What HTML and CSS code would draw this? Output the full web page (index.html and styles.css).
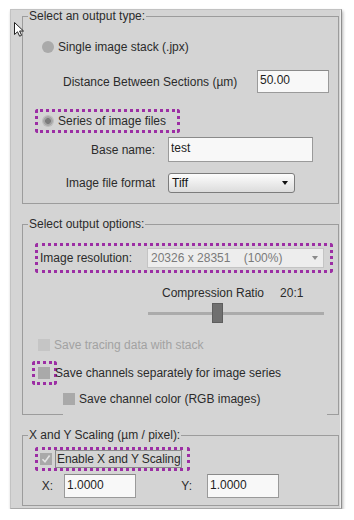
FILE: index.html
```html
<!DOCTYPE html>
<html lang="en">
<head>
    <meta charset="UTF-8">
    <title>Output Settings</title>
    <link rel="stylesheet" href="styles.css">
</head>
<body>
    <div class="panel">
        <!-- mouse pointer over the left edge -->
        <svg class="cursor" width="12" height="16" viewBox="0 0 12 16">
            <path d="M0.5 0.5 L0.5 12.5 L3.5 9.8 L5.6 14.2 L7.6 13.3 L5.6 9 L9.5 9 Z" fill="#fff" stroke="#222" stroke-width="1" stroke-linejoin="round"/>
        </svg>

        <fieldset class="group group-type">
            <legend>Select an output type:</legend>
            <div class="row row-stack">
                <span class="radio"></span>
                <span>Single image stack (.jpx)</span>
            </div>
            <div class="row row-distance">
                <span>Distance Between Sections (µm)</span>
                <input class="field field-short" type="text" value="50.00">
            </div>
            <div class="row row-series">
                <span class="mark mark-series">
                    <span class="radio radio-on"></span>
                    <span>Series of image files</span>
                </span>
            </div>
            <div class="row row-name">
                <span class="label">Base name:</span>
                <input class="field field-name" type="text" value="test">
            </div>
            <div class="row row-format">
                <span class="label">Image file format</span>
                <span class="select select-format">Tiff<span class="arrow"></span></span>
            </div>
        </fieldset>

        <fieldset class="group group-options">
            <legend>Select output options:</legend>
            <div class="row row-res">
                <span class="mark mark-res">
                    <span>Image resolution:</span>
                    <span class="select select-res">20326 x 28351    (100%)<span class="arrow arrow-light"></span></span>
                </span>
            </div>
            <div class="row row-ratio">
                <span>Compression Ratio</span>
                <span>20:1</span>
            </div>
            <div class="slider">
                <span class="thumb"></span>
            </div>
            <div class="row row-check row-tracing">
                <span class="box box-disabled"></span>
                <span class="muted">Save tracing data with stack</span>
            </div>
            <div class="row row-channels">
                <span class="mark mark-check"><span class="box"></span></span>
                <span class="channels-text">Save channels separately for image series</span>
            </div>
            <div class="row row-check row-color">
                <span class="box"></span>
                <span>Save channel color (RGB images)</span>
            </div>
        </fieldset>

        <fieldset class="group group-scale">
            <legend>X and Y Scaling (µm / pixel):</legend>
            <div class="row row-enable">
                <span class="mark mark-enable">
                    <span class="box box-checked">
                        <svg width="12" height="12" viewBox="0 0 12 12">
                            <path d="M2.5 6.2 L5 8.8 L9.6 2.6" fill="none" stroke="#e4e4e4" stroke-width="1.6"/>
                        </svg>
                    </span>
                    <span class="focus-text">Enable X and Y Scaling</span>
                </span>
            </div>
            <div class="row row-xy">
                <span class="xy-label xy-label-x">X:</span>
                <input class="field field-xy" type="text" value="1.0000">
                <span class="xy-label xy-label-y">Y:</span>
                <input class="field field-xy field-y" type="text" value="1.0000">
            </div>
        </fieldset>
    </div>
</body>
</html>
```

FILE: styles.css
```css
body {
    margin: 0;
    background-color: #ffffff;
    font-family: "Liberation Sans", Arial, sans-serif;
    font-size: 12px;
    color: #2b2b2b;
}
.panel {
    position: relative;
    box-sizing: border-box;
    width: 332px;
    height: 500px;
    margin: 9px 0 0 10px;
    padding: 0 2px 0 11px;
    background-color: #d4d4d4;
    border: 1px solid #c2c2c2;
    border-right-color: #8e8e8e;
    border-bottom-color: #a8a8a8;
    box-shadow: 1px 2px 3px rgba(0, 0, 0, 0.3), inset -1px 0 #ececec;
}
.cursor {
    position: absolute;
    left: 3px;
    top: 12px;
}
.group {
    margin: 0;
    padding: 0 0 10px;
    min-width: 0;
    border: 1px solid #9c9c9c;
}
.group legend {
    margin-left: 5px;
    padding: 0 1px;
    line-height: 13px;
}
.group-options,
.group-scale {
    margin-top: 14px;
    padding-bottom: 7px;
}
.group-options {
    border-bottom: none;
    padding-bottom: 8px;
    background: linear-gradient(#9c9c9c, #9c9c9c) left bottom / 41px 1px no-repeat,
                linear-gradient(#9c9c9c, #9c9c9c) right bottom / 12px 1px no-repeat;
    background-origin: border-box;
}
.row {
    display: flex;
    align-items: center;
    white-space: nowrap;
}
.mark {
    box-sizing: border-box;
    display: flex;
    align-items: center;
    border: 3px dotted #9c2ea4;
    border-radius: 3px;
}

/* output type */
.row-stack {
    margin-top: 12px;
    height: 24px;
    padding-left: 19px;
    gap: 4px;
}
.row-distance {
    margin-top: 11px;
    height: 23px;
    padding: 0 9px 0 40px;
}
.row-series {
    margin-top: 16px;
    height: 24px;
    padding-left: 12px;
}
.mark-series {
    width: 145px;
    height: 24px;
    padding-left: 4px;
    gap: 4px;
}
.row-name {
    margin-top: 4px;
    height: 25px;
    gap: 13px;
}
.row-format {
    margin-top: 10px;
    height: 21px;
    gap: 13px;
}
.label {
    width: 132px;
    text-align: right;
}
.radio {
    width: 12px;
    height: 12px;
    border-radius: 50%;
    background-color: #aaaaaa;
    flex-shrink: 0;
}
.radio-on {
    background: radial-gradient(circle, #7c7c7c 0 2.6px, #a6a6a6 3.2px 4.4px, #bdbdbd 5px);
}
.field {
    box-sizing: border-box;
    margin: 0;
    padding: 0 2px 3px;
    border: 1px solid #9a9a9a;
    border-top-color: #8a8a8a;
    background-color: #f8f8f8;
    font-family: "Liberation Sans", Arial, sans-serif;
    font-size: 12px;
    color: #1e1e1e;
    outline: none;
}
.field-short {
    margin-left: auto;
    width: 72px;
    height: 23px;
}
.field-name {
    width: 145px;
    height: 25px;
}
.select {
    box-sizing: border-box;
    display: flex;
    align-items: center;
    padding-left: 3px;
    white-space: pre;
}
.select-format {
    width: 127px;
    height: 20px;
    border: 1px solid #7c7c7c;
    border-radius: 3px;
    background: linear-gradient(#fdfdfd, #dcdcdc);
    color: #111;
}
.arrow {
    margin-left: auto;
    margin-right: 6px;
    border-left: 3.5px solid transparent;
    border-right: 3.5px solid transparent;
    border-top: 4px solid #111;
}
.arrow-light {
    margin-right: 5px;
    border-top-color: #8a8a8a;
}

/* output options */
.row-res {
    margin-top: 12px;
    height: 30px;
    padding-left: 12px;
}
.mark-res {
    width: 298px;
    height: 30px;
    padding: 0 6px 0 2px;
}
.select-res {
    margin-left: auto;
    width: 177px;
    height: 20px;
    border: 1px solid #c4c4c4;
    background-color: #ededed;
    color: #7a7a7a;
}
.row-ratio {
    margin-top: 12px;
    height: 16px;
    padding-left: 139px;
    gap: 16px;
}
.slider {
    display: flex;
    margin: 2px 0 0 125px;
    width: 176px;
    height: 20px;
    background: linear-gradient(#ababab, #ababab) center / 100% 3px no-repeat;
}
.thumb {
    box-sizing: border-box;
    margin-left: 64px;
    width: 11px;
    height: 20px;
    background-color: #707070;
    border: 1px solid #5e5e5e;
}
.row-check {
    height: 16px;
    gap: 4px;
    padding-left: 15px;
}
.row-tracing {
    margin-top: 14px;
}
.muted {
    color: #a2a2a2;
}
.box {
    display: block;
    width: 12px;
    height: 12px;
    background-color: #a9a9a9;
    flex-shrink: 0;
}
.box-disabled {
    background-color: #c5c5c5;
}
.row-channels {
    margin-top: 8px;
    height: 24px;
    padding-left: 9px;
}
.mark-check {
    width: 25px;
    height: 24px;
    padding-left: 3px;
}
.channels-text {
    margin-left: -2px;
}
.row-color {
    margin-top: 6px;
    padding-left: 40px;
}

/* scaling */
.row-enable {
    margin-top: 5px;
    height: 24px;
    padding-left: 12px;
}
.mark-enable {
    height: 24px;
    padding: 0 5px 0 2px;
    gap: 3px;
}
.box-checked svg {
    display: block;
}
.focus-text {
    box-sizing: border-box;
    height: 18px;
    padding: 1px 1px;
    border: 1px solid #8a8a8a;
    letter-spacing: -0.1px;
}
.row-xy {
    margin-top: 3px;
    height: 24px;
}
.xy-label {
    text-align: right;
}
.xy-label-x {
    width: 30px;
}
.xy-label-y {
    width: 45px;
    margin-left: 11px;
}
.field-xy {
    margin-left: 11px;
    width: 72px;
    height: 24px;
}
.field-y {
    margin-left: 15px;
}
```
